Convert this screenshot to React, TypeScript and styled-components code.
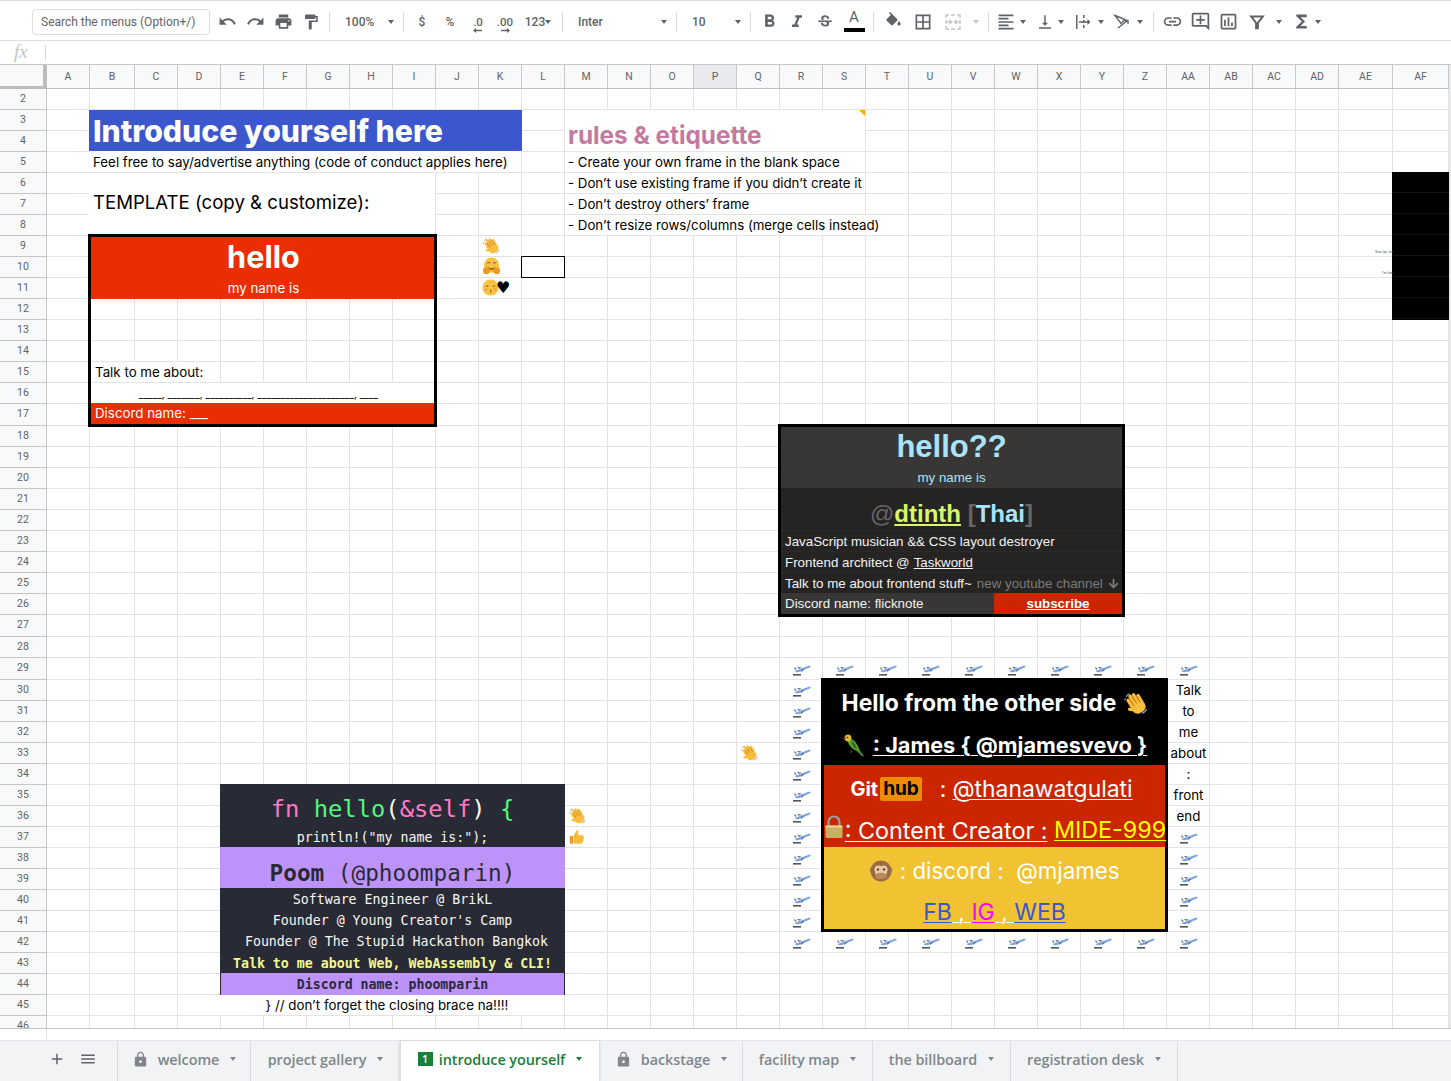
import React from "react";
import styled, { createGlobalStyle, css } from "styled-components";
import { FaArrowDown } from "react-icons/fa";
import {
  MdUndo,
  MdRedo,
  MdPrint,
  MdFormatPaint,
  MdFormatBold,
  MdFormatItalic,
  MdStrikethroughS,
  MdBorderAll,
  MdFormatAlignLeft,
  MdVerticalAlignBottom,
  MdLink,
  MdOutlineAddComment,
  MdOutlineInsertChart,
  MdFunctions,
  MdAdd,
  MdMenu,
  MdLock,
} from "react-icons/md";

const COLS = "A B C D E F G H I J K L M N O P Q R S T U V W X Y Z AA AB AC AD AE AF".split(" ");
const colWidth = (name: string) => (name === "B" ? 45 : name === "AE" ? 54 : name === "AF" ? 56 : 43);
const ROWS = Array.from({ length: 45 }, (_, i) => i + 2);
const rowHeight = (r: number) => (r === 17 || r === 27 || r === 29 ? 22 : 21);
const at = (name: string) => COLS.indexOf(name) + 2;

type Span = { $c: string; $c2?: string; $r: number; $r2?: number };

const place = css<Span>`
  grid-column: ${(p) => at(p.$c)} / ${(p) => at(p.$c2 ?? p.$c) + 1};
  grid-row: ${(p) => p.$r} / ${(p) => (p.$r2 ?? p.$r) + 1};
`;

const GlobalStyle = createGlobalStyle`
  html, body {
    margin: 0;
    padding: 0;
    background: #fff;
    overflow: hidden;
  }
`;

const Page = styled.div`
  width: 1451px;
  height: 1081px;
  display: flex;
  flex-direction: column;
  overflow: hidden;
  font-family: Roboto, "Liberation Sans", sans-serif;
`;

/* toolbar */

const Toolbar = styled.div`
  height: 41px;
  box-sizing: border-box;
  flex: none;
  display: flex;
  align-items: center;
  padding: 2px 0 0 32px;
  border-top: 1px solid #dadce0;
  border-bottom: 1px solid #e0e0e0;
  color: #5f6368;
`;

const SearchBox = styled.div`
  width: 178px;
  height: 26px;
  box-sizing: border-box;
  flex: none;
  margin-right: 3px;
  padding-left: 8px;
  display: flex;
  align-items: center;
  border: 1px solid #dadce0;
  border-radius: 4px;
  font-size: 12px;
  color: #5f6368;
`;

const Btn = styled.div<{ $w?: number; $ml?: number; $muted?: boolean }>`
  width: ${(p) => p.$w ?? 28}px;
  margin-left: ${(p) => p.$ml ?? 0}px;
  height: 26px;
  flex: none;
  display: flex;
  align-items: center;
  justify-content: center;
  font-size: 12px;
  font-weight: 500;
  color: ${(p) => (p.$muted ? "#c4c6c9" : "#5f6368")};
`;

const Sep = styled.div`
  width: 9px;
  height: 20px;
  flex: none;
  display: flex;
  justify-content: center;
  &::before {
    content: "";
    width: 1px;
    background: #dadce0;
  }
`;

const Select = styled.div<{ $w: number }>`
  width: ${(p) => p.$w}px;
  height: 26px;
  flex: none;
  box-sizing: border-box;
  padding: 0 5px 0 11px;
  display: flex;
  align-items: center;
  justify-content: space-between;
  font-size: 12px;
  font-weight: 500;
  color: #5f6368;
`;

const Caret = styled.span<{ $muted?: boolean }>`
  width: 0;
  height: 0;
  flex: none;
  border-left: 3.5px solid transparent;
  border-right: 3.5px solid transparent;
  border-top: 4px solid ${(p) => (p.$muted ? "#c4c6c9" : "#5f6368")};
`;

const CaretBox = styled(Btn)`
  height: 26px;
`;

const DecimalBtn = styled(Btn)`
  flex-direction: column;
  box-sizing: border-box;
  padding-top: 5px;
  font-size: 11.5px;
  line-height: 12px;
`;

const ColorA = styled(Btn)`
  flex-direction: column;
  justify-content: flex-start;
  font-size: 15px;
  font-weight: 400;
  line-height: 16px;
  &::after {
    content: "";
    width: 21px;
    height: 4px;
    margin-top: 3px;
    background: #000;
  }
`;

/* formula bar */

const FormulaBar = styled.div`
  height: 24px;
  flex: none;
  box-sizing: border-box;
  display: flex;
  align-items: center;
  border-bottom: 1px solid #c7c7c7;
`;

const Fx = styled.div`
  width: 46px;
  height: 16px;
  box-sizing: border-box;
  padding-left: 14px;
  border-right: 1px solid #dadce0;
  font-family: "Liberation Serif", serif;
  font-style: italic;
  font-size: 19px;
  line-height: 14px;
  color: #c4c7c5;
`;

/* sheet */

const Viewport = styled.div`
  height: 963px;
  flex: none;
  overflow: hidden;
  background: #eaeaea;
  border-bottom: 1px solid #c7c7c7;
`;

const Grid = styled.div`
  display: grid;
  width: 1449px;
  background: #fff;
  grid-template-columns: 47px ${COLS.map((c) => `${colWidth(c)}px`).join(" ")};
  grid-template-rows: 24px ${ROWS.map((r) => `${rowHeight(r)}px`).join(" ")};
  font-family: Inter, "Liberation Sans", sans-serif;
  font-size: 13.33px;
  color: #000;
`;

const Corner = styled.div`
  grid-column: 1;
  grid-row: 1;
  background: #f8f9fa;
  border-right: 4px solid #bdbdbd;
  border-bottom: 3px solid #bdbdbd;
  box-sizing: border-box;
`;

const ColHead = styled.div<{ $c: string; $active?: boolean }>`
  grid-column: ${(p) => at(p.$c)};
  grid-row: 1;
  box-sizing: border-box;
  padding-bottom: 1px;
  display: flex;
  align-items: center;
  justify-content: center;
  background: ${(p) => (p.$active ? "#e8eaed" : "#f8f9fa")};
  border-right: 1px solid #c7c7c7;
  border-bottom: 1px solid #c0c0c0;
  font-family: Roboto, sans-serif;
  font-size: 10.5px;
  color: #5f6368;
`;

const RowHead = styled.div<{ $r: number }>`
  grid-column: 1;
  grid-row: ${(p) => p.$r};
  box-sizing: border-box;
  padding-bottom: 2px;
  display: flex;
  align-items: center;
  justify-content: center;
  background: #f8f9fa;
  border-right: 1px solid #c7c7c7;
  border-bottom: 1px solid #c7c7c7;
  font-family: Roboto, sans-serif;
  font-size: 10.5px;
  color: #5f6368;
`;

const Cell = styled.div<Span>`
  ${place}
  box-sizing: border-box;
  border-right: 1px solid #e2e3e3;
  border-bottom: 1px solid #e2e3e3;
`;

const Merged = styled(Cell)`
  margin: -1px 0 0 -1px;
  background: #fff;
  display: flex;
  align-items: center;
  padding-left: 4px;
  white-space: nowrap;
`;

const RuleRow = styled(Merged)`
  margin: 0;
  padding-left: 3px;
  font-size: 13.28px;
`;

const Banner = styled.div<Span>`
  ${place}
  margin-left: -1px;
  background: #3c57cd;
  color: #fff;
  font-weight: 800;
  font-size: 30.2px;
  line-height: 43px;
  padding-left: 4px;
  white-space: nowrap;
`;

const TemplateTitle = styled(Merged)`
  margin-top: 0;
  font-size: 18.6px;
  padding-bottom: 5px;
`;

const RulesTitle = styled(RuleRow)`
  font-size: 24.3px;
  font-weight: 700;
  color: #c27ba0;
  position: relative;
  padding-top: 8px;
  &::after {
    content: "";
    position: absolute;
    top: 0;
    right: 0;
    border-left: 6px solid transparent;
    border-top: 6px solid #f9ab00;
  }
`;

const Selection = styled.div<Span>`
  ${place}
  margin: -1px 0 0 -1px;
  box-sizing: border-box;
  border: 1px solid #000;
`;

const EmojiCell = styled.div<Span>`
  ${place}
  display: flex;
  align-items: center;
  box-sizing: border-box;
  padding: 0 0 2px 3px;
`;

const PlaneCell = styled.div<Span>`
  ${place}
  display: flex;
  align-items: center;
  justify-content: center;
  padding-top: 1px;
`;

const Heart = styled.span`
  font-family: "DejaVu Sans", sans-serif;
  font-size: 16px;
  line-height: 16px;
  margin-left: -3px;
`;

const BlackBlock = styled.div<Span>`
  ${place}
  margin: -1px 0 0 -1px;
  background: repeating-linear-gradient(#000 0 20px, #121212 20px 21px);
`;

const TinyNote = styled.div<Span>`
  ${place}
  align-self: end;
  justify-self: end;
  font-family: "Liberation Sans", sans-serif;
  font-size: 3.4px;
  line-height: 4px;
  padding-bottom: 3px;
  white-space: nowrap;
  color: #555;
`;

const WrappedWord = styled.div<Span>`
  ${place}
  display: flex;
  align-items: center;
  justify-content: center;
  padding-bottom: 1px;
`;

/* blank template card */

const TemplateCard = styled.div<Span>`
  ${place}
  margin: -2px -1px -1px -2px;
  border: 3px solid #000;
  display: flex;
  flex-direction: column;
  color: #000;
`;

const RedHead = styled.div`
  height: 62px;
  flex: none;
  box-sizing: border-box;
  padding-left: 2px;
  display: flex;
  flex-direction: column;
  align-items: center;
  background: #ea2e02;
  color: #fff;
`;

const RedHello = styled.div`
  height: 41px;
  font-size: 30.67px;
  font-weight: 700;
  line-height: 39px;
`;

const RedSub = styled.div`
  line-height: 21px;
`;

const CardGap = styled.div`
  flex: 1;
`;

const TalkRow = styled.div`
  width: 129px;
  height: 21px;
  flex: none;
  box-sizing: border-box;
  padding-left: 4px;
  line-height: 21px;
  background: #fff;
  border-bottom: 1px solid #e2e3e3;
`;

const BlankRow = styled.div`
  height: 20px;
  flex: none;
  box-sizing: border-box;
  padding-right: 8px;
  background: #fff;
  text-align: center;
  font-size: 10.1px;
  line-height: 23px;
  white-space: nowrap;
  overflow: hidden;
`;

const RedFoot = styled.div`
  height: 21px;
  flex: none;
  box-sizing: border-box;
  padding-left: 4px;
  background: #ea2e02;
  color: #fff;
  line-height: 21px;
`;

/* dark card */

const DarkCard = styled.div<Span>`
  ${place}
  margin: -2px -1px -2px -2px;
  border: 3px solid #000;
  background: #252423;
  display: flex;
  flex-direction: column;
  font-family: "Liberation Sans", Arimo, sans-serif;
  color: #f3f3f3;
`;

const DarkHead = styled.div`
  height: 61px;
  flex: none;
  display: flex;
  flex-direction: column;
  align-items: center;
  background: #383735;
  color: #a9e4ff;
`;

const DarkHello = styled.div`
  height: 40px;
  font-size: 31px;
  font-weight: 700;
  line-height: 39px;
`;

const DarkSub = styled.div`
  line-height: 21px;
`;

const DarkName = styled.div`
  height: 42px;
  flex: none;
  text-align: center;
  font-size: 24px;
  font-weight: 700;
  line-height: 52px;
  color: #666;
  white-space: nowrap;
`;

const AtSign = styled.span`
  font-weight: 400;
`;

const DarkLink = styled.span`
  color: #d9f56a;
  text-decoration: underline;
`;

const DarkThai = styled.span`
  color: #a9e4ff;
`;

const DarkRow = styled.div`
  height: 21px;
  flex: none;
  box-sizing: border-box;
  padding-left: 4px;
  display: flex;
  align-items: center;
  gap: 4px;
  border-top: 1px solid #2b2a29;
  white-space: nowrap;
`;

const Underlined = styled.span`
  text-decoration: underline;
`;

const Faded = styled.span`
  display: flex;
  align-items: center;
  gap: 5px;
  margin-left: 1px;
  color: #7a7a7a;
`;

const DarkFoot = styled.div`
  flex: 1;
  display: flex;
  background: #383735;
`;

const DiscordName = styled.div`
  flex: 1;
  padding-left: 4px;
  line-height: 21px;
`;

const Subscribe = styled.div`
  width: 128px;
  text-align: center;
  font-weight: 700;
  line-height: 21px;
  text-decoration: underline;
  background: #cc2500;
  color: #fff;
`;

/* james card */

const JamesCard = styled.div<Span>`
  ${place}
  margin: -2px -1px 0 -2px;
  border: 3px solid #000;
  border-top-width: 0;
  display: flex;
  flex-direction: column;
  background: #000;
  color: #fff;
  text-align: center;
`;

const JamesRow = styled.div<{ $h?: number; $bg: string; $size?: number; $shift?: number }>`
  height: ${(p) => p.$h ?? 41}px;
  flex: none;
  box-sizing: border-box;
  padding: 6px ${(p) => p.$shift ?? 0}px 0 0;
  display: flex;
  align-items: center;
  justify-content: center;
  background: ${(p) => p.$bg};
  font-size: ${(p) => p.$size ?? 23}px;
  white-space: nowrap;
`;

const JamesBold = styled(JamesRow)`
  padding: 0;
  font-weight: 700;
  gap: 7px;
`;

const JamesGreeting = styled(JamesBold)`
  padding: 4px 0 0 2px;
`;

const JamesLine = styled.span<{ $color?: string }>`
  color: ${(p) => p.$color ?? "inherit"};
  text-decoration: underline;
  text-decoration-thickness: 1px;
  text-underline-offset: 2px;
  white-space: pre;
`;

const GitWord = styled.span`
  font-size: 20px;
  font-weight: 700;
  margin-right: 2px;
`;

const HubWord = styled.span`
  padding: 1px 3px;
  font-size: 19px;
  font-weight: 700;
  line-height: 22px;
  color: #000;
  background: #ec8c00;
  border-radius: 2px;
  margin-right: 18px;
`;

const Colon = styled.span`
  margin-right: 6px;
  white-space: pre;
`;

const PlainText = styled.span`
  white-space: pre;
`;

/* rust card */

const RustCard = styled.div<Span>`
  ${place}
  margin: -1px 0 0 -1px;
  display: flex;
  flex-direction: column;
  background: #282a36;
  color: #f8f8f2;
  font-family: "DejaVu Sans Mono", monospace;
  font-size: 13.25px;
  text-align: center;
  white-space: nowrap;
`;

const RustTitle = styled.div`
  height: 42px;
  flex: none;
  font-size: 23.8px;
  line-height: 51px;
`;

const Pink = styled.span`
  color: #ff79c6;
`;

const Green = styled.span`
  color: #50fa7b;
`;

const RustSub = styled.div`
  height: 21px;
  flex: none;
  line-height: 23px;
`;

const RustName = styled.div`
  height: 41px;
  flex: none;
  background: #bd93f9;
  color: #282a36;
  font-size: 22.7px;
  line-height: 52px;
  b {
    font-weight: 700;
  }
`;

const RustLine = styled.div<{ $h?: number; $bold?: boolean; $shift?: number }>`
  height: ${(p) => p.$h ?? 21}px;
  flex: none;
  box-sizing: border-box;
  padding-left: ${(p) => p.$shift ?? 0}px;
  line-height: ${(p) => (p.$h ?? 21) + 2}px;
  font-weight: ${(p) => (p.$bold ? 700 : 400)};
  color: ${(p) => (p.$bold ? "#f1fa8c" : "inherit")};
`;

const RustFoot = styled.div`
  flex: 1;
  box-sizing: border-box;
  background: #bd93f9;
  color: #282a36;
  border: 1px solid #282a36;
  border-top: 0;
  font-weight: 700;
  line-height: 23px;
`;

const ClosingBrace = styled(Merged)`
  margin: 0 0 0 -1px;
  padding: 0 10px 0 0;
  justify-content: center;
`;

/* tabs */

const Gap = styled.div`
  height: 11px;
  flex: none;
  margin-left: 46px;
  border-left: 1px solid #e2e3e3;
`;

const TabBar = styled.div`
  height: 41px;
  flex: none;
  display: flex;
  background: #f1f3f4;
  border-top: 1px solid #e3e5e8;
  box-sizing: border-box;
  color: #80868b;
`;

const TabTools = styled.div`
  width: 117px;
  flex: none;
  box-sizing: border-box;
  padding: 0 0 4px 48px;
  display: flex;
  align-items: center;
  gap: 13px;
  color: #5f6368;
`;

const Tab = styled.div<{ $w: number; $active?: boolean }>`
  width: ${(p) => p.$w}px;
  flex: none;
  box-sizing: border-box;
  padding-bottom: 4px;
  display: flex;
  align-items: center;
  justify-content: center;
  gap: 9px;
  font-family: "Open Sans", Roboto, sans-serif;
  font-size: 14.4px;
  font-weight: 600;
  letter-spacing: -0.05px;
  border-left: 1px solid #dadce0;
  background: ${(p) => (p.$active ? "#fff" : "transparent")};
  color: ${(p) => (p.$active ? "#188038" : "#80868b")};
  box-shadow: ${(p) => (p.$active ? "0 1px 3px rgba(60,64,67,.3)" : "none")};
  ${Caret} {
    border-top-color: ${(p) => (p.$active ? "#188038" : "#80868b")};
    margin-left: 2px;
  }
`;

const TabEnd = styled.div`
  width: 1px;
  background: #dadce0;
`;

const TabBadge = styled.span`
  width: 15px;
  height: 14px;
  flex: none;
  background: #188038;
  color: #fff;
  font-size: 10px;
  line-height: 14px;
  text-align: center;
  margin-right: -3px;
`;

/* drawings */

const WrapIcon = () => (
  <svg width="18" height="18" viewBox="0 0 18 18" fill="#5f6368">
    <rect x="2" y="2" width="1.5" height="14" />
    <rect x="9" y="2" width="1.5" height="3" />
    <rect x="9" y="7" width="1.5" height="3" />
    <rect x="9" y="12" width="1.5" height="3" />
    <path d="M5 8.2h8.5V6l3 3-3 3V9.8H5z" />
  </svg>
);

const RotateIcon = () => (
  <svg width="18" height="18" viewBox="0 0 18 18" fill="none" stroke="#5f6368" strokeWidth="1.4">
    <path d="M2 2.5l10 4-4 4z" />
    <path d="M5 15l9.5-7.5M11.5 7.5h3.5v3.5" />
  </svg>
);

const MergeIcon = () => (
  <svg width="18" height="18" viewBox="0 0 18 18" fill="none" stroke="#c4c6c9" strokeWidth="1.5">
    <path d="M2 5V2h3M7 2h4M13 2h3v3M2 13v3h3M7 16h4M13 16h3v-3M2 7v4M16 7v4" />
    <path d="M3 9h4M5.5 7L7.5 9l-2 2M15 9h-4M12.5 7L10.5 9l2 2" />
  </svg>
);

const FillIcon = () => (
  <svg width="19" height="19" viewBox="0 0 24 24" fill="#5f6368">
    <path d="M16.56 8.94L7.62 0 6.21 1.41l2.38 2.38-5.15 5.15c-.59.59-.59 1.54 0 2.12l5.5 5.5c.29.29.68.44 1.06.44s.77-.15 1.06-.44l5.5-5.5c.59-.58.59-1.53 0-2.12zM19 11.5s-2 2.17-2 3.5c0 1.1.9 2 2 2s2-.9 2-2c0-1.33-2-3.5-2-3.5z" />
  </svg>
);

const FunnelIcon = () => (
  <svg width="18" height="18" viewBox="0 0 20 20" fill="none" stroke="#5f6368" strokeWidth="2.2">
    <path d="M3.5 4h13L11 11v6H9v-6z" />
  </svg>
);

const MiniArrow = ({ left }: { left?: boolean }) => (
  <svg width="10" height="5" viewBox="0 0 10 5" fill="#5f6368">
    {left ? <path d="M3 0L0 2.5 3 5V3.2h6V1.8H3z" /> : <path d="M7 0l3 2.5L7 5V3.2H1V1.8h6z" />}
  </svg>
);

const Plane = () => (
  <svg width="18" height="14" viewBox="0 0 18 14">
    <rect x="0" y="11" width="8" height="1.6" fill="#555" />
    <path d="M1.5 8L15 3c1.6-.5 2.8-.2 2.7.5-.1.6-1.1 1.2-2.2 1.6L6 9c-1.6.5-3.3.4-4.5-1z" fill="#7ea6dc" />
    <path d="M2 6.8L1 4.6h1.2l1.6 1.6zM5.8 5.8L4 4h1.6l3.4 .8zM9 6.6L7.6 8.4h1.4l2.4-2.4z" fill="#5c6f8c" />
  </svg>
);

const Wave = ({ size }: { size: number }) => (
  <svg width={size} height={size} viewBox="0 0 24 24">
    <path d="M3 6.5C3.5 5 4.5 4 6 3.5M1.5 9.5C1.8 8.8 2 8.3 2.4 7.8M17.5 21.5c2-.5 3.5-2 4.2-4" fill="none" stroke="#8aa4b8" strokeWidth="1.1" />
    <g transform="rotate(-32 12 12)">
      <g fill="#f9bf3c">
        <rect x="5.6" y="4.5" width="3.2" height="11" rx="1.6" />
        <rect x="9" y="2.2" width="3.2" height="12" rx="1.6" />
        <rect x="12.4" y="2.8" width="3.2" height="12" rx="1.6" />
        <rect x="15.8" y="5.6" width="2.9" height="10" rx="1.4" />
        <rect x="5.6" y="11" width="13" height="11" rx="5.4" />
        <rect x="2.5" y="13" width="6" height="3" rx="1.5" transform="rotate(38 5 14)" />
      </g>
      <path d="M8.9 6.5v7M12.3 5v8M15.7 6v7.5" fill="none" stroke="#c97f1f" strokeWidth="1" />
    </g>
  </svg>
);

const Hug = () => (
  <svg width="19" height="19" viewBox="0 0 20 20">
    <circle cx="10" cy="8.5" r="8" fill="#f7c244" />
    <path d="M5.5 6.5q1.5-1.4 3 0M11.5 6.5q1.5-1.4 3 0" fill="none" stroke="#6b4312" strokeWidth="1" />
    <path d="M6 10.5q4 3 8 0q-1 3-4 3t-4-3z" fill="#8a4d14" />
    <ellipse cx="4.6" cy="14.5" rx="3.6" ry="3.6" fill="#ee9a22" />
    <ellipse cx="15.4" cy="14.5" rx="3.6" ry="3.6" fill="#ee9a22" />
  </svg>
);

const Kiss = () => (
  <svg width="17" height="17" viewBox="0 0 20 20">
    <circle cx="10" cy="10" r="9.5" fill="#f9c33f" />
    <path d="M4.5 8q1.5 1.4 3 0M12.5 8q1.5 1.4 3 0" fill="none" stroke="#6b4312" strokeWidth="1" />
    <path d="M9.5 12.5q2.2.6 .4 1.6q1.8 1 -.4 1.6" fill="none" stroke="#6b4312" strokeWidth="1" />
    <circle cx="4.5" cy="12" r="1.8" fill="#f29b4c" opacity=".7" />
    <circle cx="15.5" cy="12" r="1.8" fill="#f29b4c" opacity=".7" />
  </svg>
);

const Thumb = () => (
  <svg width="18" height="18" viewBox="0 0 20 20">
    <path d="M2 9h3.5v8.5H2.5A1 1 0 0 1 2 17z" fill="#e89b2b" />
    <path d="M6 9l3-5.5c.4-1.3 2.4-1.4 2.6.4L11.2 8h4.6c1.7 0 2.2 1.6 1.4 2.5.8.8.6 2-.2 2.5.4.8.1 1.8-.7 2.1.2 1.2-.6 2.4-2 2.4H8c-1.2 0-2-.5-2-1.5z" fill="#f8bc3a" />
  </svg>
);

const Parrot = () => (
  <svg width="24" height="24" viewBox="0 0 24 24">
    <path d="M17 16l5 7-2 .5-6-6z" fill="#3e7d2d" />
    <path d="M6 6c3-1 6 1 8 4s4 6 3 8c-3 0-7-2-9-5S5 8 6 6z" fill="#5aa02c" />
    <path d="M9 8c3 1 5 4 6 8-3-1-5-4-6-8z" fill="#2f6a2a" />
    <circle cx="6" cy="5" r="3.4" fill="#e3b72c" />
    <path d="M3.2 3.5c-1.6.6-2.2 2-1.8 3.6.8-.6 1.6-1 2.4-1z" fill="#8c3b1d" />
    <circle cx="5.5" cy="4.4" r=".7" fill="#111" />
    <path d="M9 17l-1 3h1.2l1-2.5z" fill="#6b4a2a" />
  </svg>
);

const LockEmoji = () => (
  <svg width="22" height="24" viewBox="0 0 22 24">
    <path d="M5.5 11V7a5.5 5.5 0 0 1 11 0v4" fill="none" stroke="#9aa0a6" strokeWidth="2.2" />
    <rect x="2.5" y="10.5" width="17" height="12.5" rx="1.5" fill="#c9b063" />
    <rect x="2.5" y="10.5" width="17" height="2" fill="#e5d28e" />
  </svg>
);

const Monkey = () => (
  <svg width="24" height="24" viewBox="0 0 24 24">
    <circle cx="3.6" cy="11" r="3" fill="#b98a5e" />
    <circle cx="20.4" cy="11" r="3" fill="#b98a5e" />
    <circle cx="12" cy="12" r="10.5" fill="#9a6b43" />
    <path d="M5.5 10c0-3 3-4.5 6.5-3 3.5-1.5 6.5 0 6.5 3s-1 8-6.5 10C6.5 18 5.5 13 5.5 10z" fill="#e9c7a2" />
    <circle cx="9" cy="10.5" r="1.1" fill="#222" />
    <circle cx="15" cy="10.5" r="1.1" fill="#222" />
    <ellipse cx="12" cy="17" rx="6" ry="3.2" fill="#b98a5e" />
  </svg>
);

const planeCells: Span[] = [
  ...["R", "S", "T", "U", "V", "W", "X", "Y", "Z", "AA"].flatMap((c) => [
    { $c: c, $r: 29 },
    { $c: c, $r: 42 },
  ]),
  ...Array.from({ length: 12 }, (_, i) => ({ $c: "R", $r: 30 + i })),
  ...[37, 38, 39, 40, 41].map((r) => ({ $c: "AA", $r: r })),
];

const aboutWords = ["Talk", "to", "me", "about", ":", "front", "end"];

const tabs = [
  { name: "welcome", w: 133, locked: true },
  { name: "project gallery", w: 150 },
  { name: "introduce yourself", w: 199, active: true },
  { name: "backstage", w: 143, locked: true },
  { name: "facility map", w: 130 },
  { name: "the billboard", w: 138 },
  { name: "registration desk", w: 167 },
];

export default function App() {
  return (
    <Page>
      <GlobalStyle />
      <Toolbar>
        <SearchBox>Search the menus (Option+/)</SearchBox>
        <Btn><MdUndo size={19} /></Btn>
        <Btn><MdRedo size={19} /></Btn>
        <Btn><MdPrint size={19} /></Btn>
        <Btn><MdFormatPaint size={18} /></Btn>
        <Sep />
        <Select $w={65}>100%<Caret /></Select>
        <Sep />
        <Btn>$</Btn>
        <Btn>%</Btn>
        <DecimalBtn>.0<MiniArrow left /></DecimalBtn>
        <DecimalBtn $w={26}>.00<MiniArrow /></DecimalBtn>
        <Btn $w={40}>123<Caret /></Btn>
        <Sep />
        <Select $w={105}>Inter<Caret /></Select>
        <Sep />
        <Select $w={65}>10<Caret /></Select>
        <Sep />
        <Btn><MdFormatBold size={21} /></Btn>
        <Btn><MdFormatItalic size={20} /></Btn>
        <Btn><MdStrikethroughS size={18} /></Btn>
        <ColorA $w={30}>A</ColorA>
        <Sep />
        <Btn $w={30}><FillIcon /></Btn>
        <Btn $w={30}><MdBorderAll size={20} /></Btn>
        <Btn $w={30}><MergeIcon /></Btn>
        <CaretBox $w={16}><Caret $muted /></CaretBox>
        <Sep />
        <Btn $w={26}><MdFormatAlignLeft size={20} /></Btn>
        <CaretBox $w={8}><Caret /></CaretBox>
        <Btn $w={18} $ml={9}><MdVerticalAlignBottom size={20} /></Btn>
        <CaretBox $w={14}><Caret /></CaretBox>
        <Btn $w={18} $ml={6}><WrapIcon /></Btn>
        <CaretBox $w={18}><Caret /></CaretBox>
        <Btn $w={18} $ml={3}><RotateIcon /></Btn>
        <CaretBox $w={18}><Caret /></CaretBox>
        <Sep />
        <Btn><MdLink size={21} /></Btn>
        <Btn><MdOutlineAddComment size={21} /></Btn>
        <Btn><MdOutlineInsertChart size={21} /></Btn>
        <Btn $ml={1}><FunnelIcon /></Btn>
        <CaretBox $w={15}><Caret /></CaretBox>
        <Btn $ml={1}><MdFunctions size={21} /></Btn>
        <CaretBox $w={6}><Caret /></CaretBox>
      </Toolbar>

      <FormulaBar>
        <Fx>fx</Fx>
      </FormulaBar>

      <Viewport>
        <Grid>
          <Corner />
          {COLS.map((c) => (
            <ColHead key={c} $c={c} $active={c === "P"}>{c}</ColHead>
          ))}
          {ROWS.map((r) => (
            <RowHead key={r} $r={r}>{r}</RowHead>
          ))}
          {ROWS.flatMap((r) => COLS.map((c) => <Cell key={`${c}${r}`} $c={c} $r={r} />))}

          <Banner $c="B" $c2="K" $r={3} $r2={4}>Introduce yourself here</Banner>
          <Merged $c="B" $c2="K" $r={5}>Feel free to say/advertise anything (code of conduct applies here)</Merged>
          <TemplateTitle $c="B" $c2="I" $r={6} $r2={8}>TEMPLATE (copy &amp; customize):</TemplateTitle>

          <RulesTitle $c="M" $c2="S" $r={3} $r2={4}>rules &amp; etiquette</RulesTitle>
          <RuleRow $c="M" $c2="S" $r={5}>- Create your own frame in the blank space</RuleRow>
          <RuleRow $c="M" $c2="S" $r={6}>- Don’t use existing frame if you didn’t create it</RuleRow>
          <RuleRow $c="M" $c2="S" $r={7}>- Don’t destroy others’ frame</RuleRow>
          <RuleRow $c="M" $c2="T" $r={8}>- Don’t resize rows/columns (merge cells instead)</RuleRow>

          <Selection $c="L" $r={10} />

          <TemplateCard $c="B" $c2="I" $r={9} $r2={17}>
            <RedHead>
              <RedHello>hello</RedHello>
              <RedSub>my name is</RedSub>
            </RedHead>
            <CardGap />
            <TalkRow>Talk to me about:</TalkRow>
            <BlankRow>_____, _______, __________, _____________________, ____</BlankRow>
            <RedFoot>Discord name: ___</RedFoot>
          </TemplateCard>

          <EmojiCell $c="K" $r={9}><Wave size={19} /></EmojiCell>
          <EmojiCell $c="K" $r={10}><Hug /></EmojiCell>
          <EmojiCell $c="K" $r={11}><Kiss /><Heart>♥</Heart></EmojiCell>

          <BlackBlock $c="AF" $r={6} $r2={12} />
          <TinyNote $c="AE" $r={9}>Start by: tell</TinyNote>
          <TinyNote $c="AE" $r={10}>I'm fine</TinyNote>

          <DarkCard $c="R" $c2="Y" $r={18} $r2={26}>
            <DarkHead>
              <DarkHello>hello??</DarkHello>
              <DarkSub>my name is</DarkSub>
            </DarkHead>
            <DarkName>
              <AtSign>@</AtSign><DarkLink>dtinth</DarkLink> [<DarkThai>Thai</DarkThai>]
            </DarkName>
            <DarkRow>JavaScript musician &amp;&amp; CSS layout destroyer</DarkRow>
            <DarkRow>Frontend architect @ <Underlined>Taskworld</Underlined></DarkRow>
            <DarkRow>
              Talk to me about frontend stuff~
              <Faded>new youtube channel <FaArrowDown size={11} /></Faded>
            </DarkRow>
            <DarkFoot>
              <DiscordName>Discord name: flicknote</DiscordName>
              <Subscribe>subscribe</Subscribe>
            </DarkFoot>
          </DarkCard>

          {planeCells.map((p) => (
            <PlaneCell key={`${p.$c}${p.$r}`} {...p}><Plane /></PlaneCell>
          ))}
          {aboutWords.map((word, i) => (
            <WrappedWord key={word} $c="AA" $r={30 + i}>{word}</WrappedWord>
          ))}
          <EmojiCell $c="Q" $r={33}><Wave size={19} /></EmojiCell>

          <JamesCard $c="S" $c2="Z" $r={30} $r2={41}>
            <JamesGreeting $h={46} $bg="#000" $size={22.9}>Hello from the other side <Wave size={26} /></JamesGreeting>
            <JamesBold $bg="#000" $size={21.7}>
              <Parrot />
              <JamesLine>: James {"{"} @mjamesvevo {"}"}</JamesLine>
            </JamesBold>
            <JamesRow $bg="#cc2600" $size={22.9} $shift={6}>
              <GitWord>Git</GitWord>
              <HubWord>hub</HubWord>
              <Colon>:</Colon>
              <JamesLine>@thanawatgulati</JamesLine>
            </JamesRow>
            <JamesRow $bg="#cc2600" $size={23.3}>
              <JamesLine><LockEmoji />: Content Creator :</JamesLine>
              <PlainText> </PlainText>
              <JamesLine $color="#ffff00">MIDE-999</JamesLine>
            </JamesRow>
            <JamesRow $bg="#f1c232" $size={22.3}>
              <Monkey />
              <PlainText> : discord :  @mjames</PlainText>
            </JamesRow>
            <JamesRow $bg="#f1c232">
              <JamesLine $color="#3c57cd">FB</JamesLine>
              <JamesLine> , </JamesLine>
              <JamesLine $color="#ff00ff">IG</JamesLine>
              <JamesLine> , </JamesLine>
              <JamesLine $color="#3c57cd">WEB</JamesLine>
            </JamesRow>
          </JamesCard>

          <RustCard $c="E" $c2="L" $r={35} $r2={44}>
            <RustTitle>
              <Pink>fn</Pink> <Green>hello</Green>(<Pink>&amp;self</Pink>) <Green>{"{"}</Green>
            </RustTitle>
            <RustSub>println!("my name is:");</RustSub>
            <RustName><b>Poom</b> (@phoomparin)</RustName>
            <RustLine>Software Engineer @ BrikL</RustLine>
            <RustLine>Founder @ Young Creator's Camp</RustLine>
            <RustLine $h={22} $shift={8}>Founder @ The Stupid Hackathon Bangkok</RustLine>
            <RustLine $bold>Talk to me about Web, WebAssembly &amp; CLI!</RustLine>
            <RustFoot>Discord name: phoomparin</RustFoot>
          </RustCard>
          <ClosingBrace $c="E" $c2="L" $r={45}>{"}"} // don’t forget the closing brace na!!!!</ClosingBrace>
          <EmojiCell $c="M" $r={36}><Wave size={19} /></EmojiCell>
          <EmojiCell $c="M" $r={37}><Thumb /></EmojiCell>
        </Grid>
      </Viewport>
      <Gap />

      <TabBar>
        <TabTools>
          <MdAdd size={18} />
          <MdMenu size={18} />
        </TabTools>
        {tabs.map((t) => (
          <Tab key={t.name} $w={t.w} $active={t.active}>
            {t.locked && <MdLock size={17} />}
            {t.active && <TabBadge>1</TabBadge>}
            {t.name}
            <Caret />
          </Tab>
        ))}
        <TabEnd />
      </TabBar>
    </Page>
  );
}
